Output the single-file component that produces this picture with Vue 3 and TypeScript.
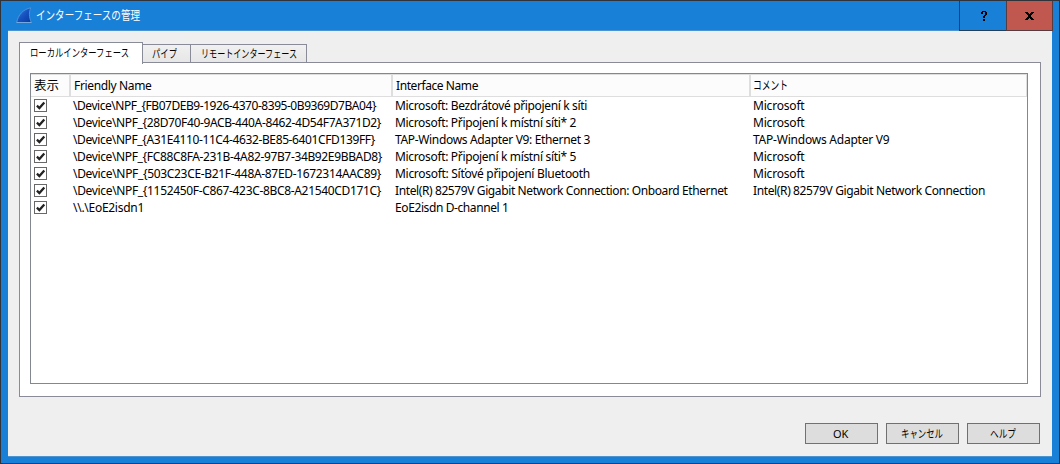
<script setup lang="ts">
import type { Directive } from 'vue'

interface Label { text: string; width: number }
interface Row { device: Label; name: Label; comment?: Label }

const label = (text: string, width: number): Label => ({ text, width })

/** Spreads Latin text, or condenses Japanese text, to the given width. */
const vFit: Directive<HTMLElement, number> = {
  mounted(el, { value }) {
    const natural = el.getBoundingClientRect().width
    if (!natural) return
    if (/[\u3000-\u9fff]/.test(el.textContent ?? '')) {
      el.style.transform = `scaleX(${value / natural})`
      el.style.marginRight = `${value - natural}px`
    } else {
      el.style.letterSpacing = `${(value - natural) / (el.textContent ?? '').length}px`
    }
  },
}

const tabs = [
  { id: 'local', title: label('ローカルインターフェース', 99) },
  { id: 'pipe', title: label('パイプ', 25) },
  { id: 'remote', title: label('リモートインターフェース', 96) },
]

const headers = [
  label('表示', 25),
  label('Friendly Name', 77.5),
  label('Interface Name', 82),
  label('コメント', 35),
]

const microsoft = label('Microsoft', 51.5)
const rows: Row[] = [
  { device: label('\\Device\\NPF_{FB07DEB9-1926-4370-8395-0B9369D7BA04}', 303), name: label('Microsoft: Bezdrátové připojení k síti', 192), comment: microsoft },
  { device: label('\\Device\\NPF_{28D70F40-9ACB-440A-8462-4D54F7A371D2}', 308), name: label('Microsoft: Připojení k místní síti* 2', 181), comment: microsoft },
  { device: label('\\Device\\NPF_{A31E4110-11C4-4632-BE85-6401CFD139FF}', 302), name: label('TAP-Windows Adapter V9: Ethernet 3', 195), comment: label('TAP-Windows Adapter V9', 136.5) },
  { device: label('\\Device\\NPF_{FC88C8FA-231B-4A82-97B7-34B92E9BBAD8}', 309), name: label('Microsoft: Připojení k místní síti* 5', 181), comment: microsoft },
  { device: label('\\Device\\NPF_{503C23CE-B21F-448A-87ED-1672314AAC89}', 308), name: label('Microsoft: Síťové připojení Bluetooth', 195), comment: microsoft },
  { device: label('\\Device\\NPF_{1152450F-C867-423C-8BC8-A21540CD171C}', 308), name: label('Intel(R) 82579V Gigabit Network Connection: Onboard Ethernet', 332.5), comment: label('Intel(R) 82579V Gigabit Network Connection', 232) },
  { device: label('\\\\.\\EoE2isdn1', 71), name: label('EoE2isdn D-channel 1', 113.5) },
]

const buttons = [
  { id: 'ok', title: label('OK', 15) },
  { id: 'cancel', title: label('キャンセル', 42) },
  { id: 'help', title: label('ヘルプ', 26) },
]
</script>

<template>
  <div class="window">
    <header class="titlebar">
      <svg class="fin" width="16" height="17" viewBox="0 0 16 17">
        <defs>
          <linearGradient id="fin-fill" x1="0" y1="0" x2="1" y2="1">
            <stop offset="0" stop-color="#3b86e4" />
            <stop offset=".5" stop-color="#1652c0" />
            <stop offset="1" stop-color="#083a9e" />
          </linearGradient>
        </defs>
        <path d="M.7 15.500C2 8 7 2.200 14.800.8C12.800 5 13 10.500 15.300 15.500Z" fill="url(#fin-fill)" stroke="#4b93dc" />
        <path d="M.5 15.500H15.500" stroke="#73a9df" />
      </svg>
      <span v-fit="104" class="title fit">インターフェースの管理</span>
      <div class="controls">
        <button class="control" aria-label="Help">
          <svg width="6" height="10" viewBox="0 0 6 10" shape-rendering="crispEdges">
            <path d="M1 0h4v1h1v3h-1v1h-1v2h-2v-2h1v-1h1v-3h-2v2h-2v-2h1zM2 8h2v2h-2z" />
          </svg>
        </button>
        <button class="control close" aria-label="Close">
          <svg width="9" height="8" viewBox="0 0 9 8" shape-rendering="crispEdges">
            <path d="M0 0h3v1h1v1h1v-1h1v-1h3v1h-1v1h-1v1h-1v2h1v1h1v1h1v1h-3v-1h-1v-1h-1v1h-1v1h-3v-1h1v-1h1v-1h1v-2h-1v-1h-1v-1h-1z" />
          </svg>
        </button>
      </div>
    </header>

    <main class="client">
      <nav class="tabs">
        <div v-for="tab in tabs" :key="tab.id" class="tab" :class="tab.id">
          <span v-fit="tab.title.width" class="fit">{{ tab.title.text }}</span>
        </div>
      </nav>
      <section class="pane">
        <div class="table">
          <div class="grid head">
            <div v-for="h in headers" :key="h.text" class="th">
              <span v-fit="h.width" class="fit">{{ h.text }}</span>
            </div>
          </div>
          <div v-for="row in rows" :key="row.device.text" class="grid row">
            <div class="check-cell">
              <svg width="13" height="13" viewBox="0 0 13 13">
                <rect x=".5" y=".5" width="12" height="12" fill="#fff" stroke="#686868" />
                <path d="M2.900 6.600L5.400 9L10.300 3.600" fill="none" stroke="#222" stroke-width="2.300" />
              </svg>
            </div>
            <div class="td"><span v-fit="row.device.width" class="fit">{{ row.device.text }}</span></div>
            <div class="td"><span v-fit="row.name.width" class="fit">{{ row.name.text }}</span></div>
            <div class="td"><span v-if="row.comment" v-fit="row.comment.width" class="fit">{{ row.comment.text }}</span></div>
          </div>
        </div>
      </section>
      <footer class="actions">
        <button v-for="b in buttons" :key="b.id" class="action" :class="b.id">
          <span v-fit="b.title.width" class="fit">{{ b.title.text }}</span>
        </button>
      </footer>
    </main>
  </div>
</template>

<style scoped>
* { box-sizing: border-box; }
.window {
  width: 1060px;
  height: 464px;
  display: flex;
  flex-direction: column;
  background: #1980d8;
  border: 1px solid #30343a;
  padding: 0 7px 6px;
  color: #000;
  font: 12px/16px "Noto Sans", "Noto Sans CJK JP", sans-serif;
}
button { margin: 0; padding: 0; font: inherit; color: inherit; border-radius: 0; }
.fit { display: inline-block; white-space: pre; transform-origin: 0 50%; flex: none; }
.titlebar { height: 30px; display: flex; flex: none; border-bottom: 1px solid #4c94cf; }
.fin { margin: 6px 0 0 8px; flex: none; }
.title { color: #fff; font-size: 12px; line-height: 30px; margin-left: 4px; }
.controls { display: flex; margin-left: auto; height: 30px; }
.control {
  width: 48px;
  height: 30px;
  display: flex;
  align-items: center;
  justify-content: center;
  background: #1980d8;
  border: 1px solid #263f58;
  border-top: 0;
}
.control svg { margin-left: 2px; }
.close { margin-left: -1px; width: 47px; background: #c1584f; border-color: #543c40; }
.close svg { margin-left: 0; }
.controls { margin-right: -1px; }
.client {
  flex: 1;
  display: flex;
  flex-direction: column;
  background: #efefef;
  padding: 11px 11px 12px;
  border-bottom: 1px solid #4c94cf;
}
.tabs { display: flex; align-items: flex-end; height: 21px; }
.tab {
  height: 19px;
  border: 1px solid #898b98;
  border-left: 0;
  border-bottom: 0;
  background: linear-gradient(#f0f0f0, #e6e6e6);
  display: flex;
  align-items: center;
  font-size: 11px;
  padding-bottom: 1px;
}
.local {
  width: 124px;
  height: auto;
  margin-bottom: -1px;
  border-left: 1px solid #898b98;
  background: #fff;
  padding: 0 0 2px 10px;
  z-index: 1;
  align-self: stretch;
}
.pipe { width: 48px; padding-left: 9px; }
.remote { width: 116px; padding-left: 10px; }
.pane { height: 335px; margin-top: -1px; border: 1px solid #898b98; background: #fff; padding: 10px 12px 12px 10px; flex: none; }
.table { height: 311px; border: 1px solid #828790; background: #fff; }
.grid { display: grid; grid-template-columns: 40px 322px 358px 1fr; }
.head { height: 23px; margin-bottom: 1px; background: #fcfcfc; border: 1px solid #dedede; border-width: 1px 1px 1px 0; }
.th { display: flex; align-items: center; padding-left: 3px; border-right: 2px solid #dedede; }
.th:last-child { border-right: 0; padding-left: 2px; }
.row { height: 17px; }
.check-cell { padding: 1px 0 0 3px; }
.check-cell svg { display: block; }
.td { display: flex; align-items: center; padding: 0 0 2px 2px; min-width: 0; }
.actions { display: flex; justify-content: flex-end; gap: 8px; margin: auto 1px 0 0; }
.action {
  width: 73px;
  height: 21px;
  background: #ddd;
  border: 1px solid #707070;
  display: flex;
  align-items: center;
  justify-content: center;
  font-size: 11px;
}
.action .fit { position: relative; left: -1px; }
.ok { border-color: #3c7fb1; }
</style>

<style>
html, body { margin: 0; overflow: hidden; }
</style>
